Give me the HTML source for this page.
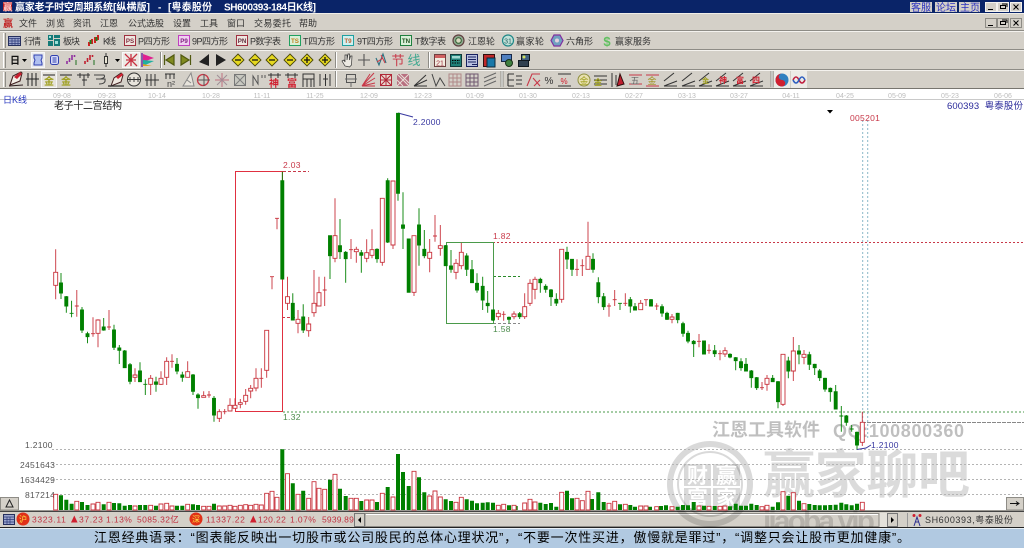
<!DOCTYPE html>
<html lang="zh">
<head>
<meta charset="utf-8">
<title>赢家老子时空周期系统</title>
<style>
html,body{margin:0;padding:0;background:#fff;width:1024px;height:548px;overflow:hidden}
svg{display:block;position:absolute;left:0;top:0}
text{font-family:"Liberation Sans","WenQuanYi Zen Hei","Noto Sans CJK SC",sans-serif}
.t9{font-size:9px;fill:#333}
.d{font-size:7px;fill:#bcbcbc;text-anchor:middle}
.n{font-size:8.5px;letter-spacing:.3px}
</style>
</head>
<body>
<svg width="1024" height="548" viewBox="0 0 1024 548" xmlns="http://www.w3.org/2000/svg">
<!-- base -->
<rect x="0" y="0" width="1024" height="548" fill="#fff"/>
<rect x="0" y="0" width="1024" height="13" fill="#0a2468"/>
<rect x="0" y="13" width="1024" height="76" fill="#d4d0c8"/>
<path d="M0 13.5H1024" stroke="#f0eee8"/>
<path d="M0 30.5H1024M0 49.5H1024M0 69.5H1024" stroke="#8e8c86"/>
<path d="M0 31.5H1024M0 50.5H1024M0 70.5H1024" stroke="#f4f2ee"/>
<path d="M0 88.5H1024" stroke="#77756f"/>
<path d="M0 99.5H1024" stroke="#c9c9c9"/>
<!-- status bar -->
<rect x="0" y="510" width="1024" height="18" fill="#d4d0c8"/>
<path d="M0 510.5H1024" stroke="#9a9892"/><path d="M0 511.5H1024" stroke="#444"/>
<rect x="354" y="513" width="544" height="14" fill="#e4e1da"/>
<rect x="365" y="513.5" width="514" height="13" fill="#d4d0c8" stroke="#8e8c86"/>
<path d="M366 514.5H878" stroke="#fff"/>
<rect x="354.5" y="513.5" width="10" height="13" fill="#d4d0c8" stroke="#777"/>
<path d="M361 517v6l-3-3z" fill="#000"/>
<rect x="887.5" y="513.5" width="10" height="13" fill="#d4d0c8" stroke="#777"/>
<path d="M891 517v6l3-3z" fill="#000"/>
<path d="M907.5 513V527" stroke="#999"/>
<!-- watermark -->
<g>
<g fill="#000" fill-opacity=".15">
<path fill-rule="evenodd" d="M710 441a43 43 0 1 0 .01 0zM710 447a37 37 0 1 1-.01 0zM710 451a33 33 0 1 0 .01 0zM710 453a31 31 0 1 1-.01 0z"/>
<rect x="684" y="464" width="27" height="22"/><rect x="713" y="464" width="27" height="22"/><rect x="684" y="488" width="27" height="22"/><rect x="713" y="488" width="27" height="22"/>
</g>
<g fill="#fff" font-weight="700" font-size="21" text-anchor="middle">
<text x="697.5" y="483">财</text><text x="726.5" y="483">赢</text><text x="697.5" y="506">富</text><text x="726.5" y="506">家</text>
</g>
<text x="763" y="493" font-size="52" font-weight="700" fill="#000" fill-opacity=".14" textLength="207" lengthAdjust="spacing">赢家聊吧</text>
<text x="712" y="436" font-size="18" font-weight="700" fill="#000" fill-opacity=".25" textLength="108" lengthAdjust="spacing">江恩工具软件</text>
<text x="833" y="437" font-size="18" font-weight="700" fill="#000" fill-opacity=".25" textLength="131" lengthAdjust="spacing">QQ:100800360</text>
<text x="763" y="531" font-size="30" font-weight="700" fill="#000" fill-opacity=".14" textLength="112" lengthAdjust="spacing">jiaoba.vip</text>
</g>
<!-- title text -->
<g fill="#fff" font-weight="700" font-size="10">
<text x="15" y="10.5" textLength="98" lengthAdjust="spacing">赢家老子时空周期系统</text>
<text x="113" y="10.5" textLength="37" lengthAdjust="spacing">[纵横版]</text>
<text x="158" y="10.5">-</text>
<text x="168" y="10.5" textLength="44" lengthAdjust="spacing">[粤泰股份</text>
<text x="224" y="10.5" textLength="92" lengthAdjust="spacing">SH600393-184日K线]</text>
</g>
<rect x="3" y="2" width="9" height="9" fill="#c02020"/>
<text x="3" y="10.5" font-size="9.5" font-weight="700" fill="#ffd0d0">赢</text>
<!-- title buttons -->
<g fill="#d4d0c8"><rect x="910" y="2" width="22" height="10"/><rect x="935" y="2" width="22" height="10"/><rect x="959" y="2" width="21" height="10"/></g>
<g fill="#2a30c0" font-size="10"><text x="911" y="11" textLength="20">客服</text><text x="936" y="11" textLength="20">论坛</text><text x="960" y="11" textLength="20">主页</text></g>
<g id="wb" fill="#d4d0c8" stroke="#f4f2ee">
<rect x="985.5" y="2.5" width="11" height="9"/><rect x="997.5" y="2.5" width="11" height="9"/><rect x="1010.5" y="2.5" width="11" height="9"/>
<rect x="985.5" y="18.5" width="11" height="9" stroke="#8e8c86"/><rect x="997.5" y="18.5" width="11" height="9" stroke="#8e8c86"/><rect x="1010.5" y="18.5" width="11" height="9" stroke="#8e8c86"/>
</g>
<g stroke="#000" fill="none">
<path d="M988 9.5h5M1000.5 5.5h5v3h-5zM1002 4h5v3M1013.5 4.5l5 5M1018.5 4.5l-5 5"/>
<path d="M988 25.5h5M1000.5 21.5h5v3h-5zM1002 20h5v3M1013.5 20.5l5 5M1018.5 20.5l-5 5"/>
</g>
<!-- menu -->
<text x="3" y="27" font-size="10" font-weight="700" fill="#c02020">赢</text>
<g class="t9">
<text x="19" y="26.5" class="t9" textLength="18">文件</text>
<text x="46" y="26.5" class="t9" textLength="19">浏览</text>
<text x="73" y="26.5" class="t9" textLength="18">资讯</text>
<text x="100" y="26.5" class="t9" textLength="18">江恩</text>
<text x="128" y="26.5" class="t9" textLength="36">公式选股</text>
<text x="173" y="26.5" class="t9" textLength="18">设置</text>
<text x="200" y="26.5" class="t9" textLength="18">工具</text>
<text x="227" y="26.5" class="t9" textLength="18">窗口</text>
<text x="254" y="26.5" class="t9" textLength="37">交易委托</text>
<text x="299" y="26.5" class="t9" textLength="18">帮助</text>
</g>
<!-- grips -->
<path d="M3.5 33V48M3.5 52V68M3.5 72V87" stroke="#fff"/><path d="M5.5 33V48M5.5 52V68M5.5 72V87" stroke="#8e8c86"/>
<!-- row 2 -->
<g class="t9">
<text x="24" y="44.5" class="t9" textLength="17">行情</text>
<text x="63" y="44.5" class="t9" textLength="17">板块</text>
<text x="103" y="44.5" class="t9" textLength="13">K线</text>
<text x="138" y="44.5" class="t9" textLength="32">P四方形</text>
<text x="192" y="44.5" class="t9" textLength="36">9P四方形</text>
<text x="250" y="44.5" class="t9" textLength="31">P数字表</text>
<text x="303" y="44.5" class="t9" textLength="32">T四方形</text>
<text x="357" y="44.5" class="t9" textLength="36">9T四方形</text>
<text x="415" y="44.5" class="t9" textLength="31">T数字表</text>
<text x="468" y="44.5" class="t9" textLength="27">江恩轮</text>
<text x="516" y="44.5" class="t9" textLength="28">赢家轮</text>
<text x="566" y="44.5" class="t9" textLength="27">六角形</text>
<text x="615" y="44.5" class="t9" textLength="36">赢家服务</text>
</g>
<rect x="8.5" y="36.5" width="12" height="9" fill="#9aa4cc" stroke="#26305e"/><path d="M9 38.5H20M9 41H20M9 43.4H20M12 38V45M15 38V45M18 38V45" stroke="#2c3a78" stroke-width=".7"/>
<g fill="#147a78"><rect x="48" y="35" width="5" height="5"/><rect x="54" y="35" width="6" height="3"/><rect x="48" y="41" width="5" height="5"/><rect x="54" y="39" width="6" height="7"/></g><g fill="#9be0d8"><rect x="49" y="36" width="2" height="2"/><rect x="55" y="41" width="3" height="3"/></g>
<path d="M89 42v4M92 39v5M95 37v6M98 35v5" stroke="#d02020" stroke-width="2"/><path d="M90.5 40v4M96.5 37v4" stroke="#208020" stroke-width="2"/>
<g font-size="6.2" font-weight="700" text-anchor="middle">
<rect x="124.5" y="35.5" width="11" height="10" fill="#efe6e0" stroke="#a03040"/><text x="130" y="43" fill="#803040">PS</text>
<rect x="178.5" y="35.5" width="11" height="10" fill="#f0d0f0" stroke="#c040c0"/><text x="184" y="43" fill="#802080">P9</text>
<rect x="236.5" y="35.5" width="11" height="10" fill="#efe6e0" stroke="#a03040"/><text x="242" y="43" fill="#603040">PN</text>
<rect x="289.5" y="35.5" width="11" height="10" fill="#d8f0d8" stroke="#20a060"/><text x="295" y="43" fill="#c08020">TS</text>
<rect x="342.5" y="35.5" width="11" height="10" fill="#d0f0f0" stroke="#20a0a0"/><text x="348" y="43" fill="#c06030">T9</text>
<rect x="400.5" y="35.5" width="11" height="10" fill="#d8f0d8" stroke="#208040"/><text x="406" y="43" fill="#205020">TN</text>
</g>
<circle cx="458.5" cy="40.5" r="5.5" fill="#90a890" stroke="#604040" stroke-width="1.2"/><circle cx="458.5" cy="40.5" r="2.8" fill="#d8d8c0" stroke="#306030"/>
<circle cx="508" cy="40.5" r="5.5" fill="#c0e0d8" stroke="#208888" stroke-width="1.2"/><text x="508" y="43.5" font-size="7" text-anchor="middle" fill="#206060">31</text>
<path d="M554 35h6l3 5.5-3 5.5h-6l-3-5.5z" fill="#70a0c0" stroke="#8030a0" stroke-width="1.2"/><circle cx="557" cy="40.5" r="2" fill="#e0d0e0"/>
<text x="607" y="46" font-size="13" font-weight="700" text-anchor="middle" fill="#60c060">$</text>
<!-- row 3 -->
<text x="10" y="64" font-size="10" font-weight="700" fill="#111">日</text>
<path d="M22 59h5l-2.5 3z" fill="#000"/>
<rect x="31.5" y="52.5" width="13" height="15" fill="#e6e8ee" stroke="#f6f6f6"/>
<path d="M34 55h8v3l-1 2 1 3v2h-8v-2l1-3-1-2z" fill="#b0c0f0" stroke="#3040b0"/>
<rect x="50.5" y="55.5" width="8" height="9" rx="2" fill="#d8dcf8" stroke="#3040b0"/><path d="M52.5 58h4M52.5 60h4M52.5 62h4" stroke="#3040b0"/>
<path d="M67 64v-3M69.5 62v-4M72 60v-5M74.5 57v-2" stroke="#9030a0" stroke-width="1.6"/><path d="M76 60v5" stroke="#207020"/>
<path d="M85 64v-3M87.5 62v-4M90 60v-5M92.5 57v-2" stroke="#c02030" stroke-width="1.6"/><path d="M94 60v5" stroke="#207020"/>
<rect x="104.5" y="56.5" width="3" height="7" fill="#e8e4d4" stroke="#333"/><path d="M106 53v3M106 64v3" stroke="#333"/>
<path d="M115 59h5l-2.5 3z" fill="#000"/>
<rect x="122.5" y="52.5" width="17" height="15" fill="#ece9e4" stroke="#f8f8f8"/>
<path d="M125 54l12 12M137 54l-12 12M126 60h10M131 54v12" stroke="#c83040" stroke-width="1.3"/>
<path d="M142 53v14" stroke="#7030a0" stroke-width="1.5"/><path d="M143 54l11 4-11 4z" fill="#e02090"/><path d="M143 60l11 1-11 5z" fill="#20b0a0"/><path d="M143 64l9 2h-9z" fill="#e0a020"/>
<path d="M160.5 52V68" stroke="#8e8c86"/><path d="M161.5 52V68" stroke="#fff"/>
<path d="M164.5 55V65M174 55v10l-8-5z" fill="#808a20" stroke="#505810" stroke-width="1.2"/>
<path d="M190.5 55V65M181 55v10l8-5z" fill="#808a20" stroke="#505810" stroke-width="1.2"/>
<path d="M209 54v12l-10-4z" fill="#222"/><path d="M216 54v12l10-6z" fill="#222"/>
<g fill="#e6d820" stroke="#4a4808" stroke-width=".9">
<path d="M238 54l6 6-6 6-6-6z"/><path d="M255 54l6 6-6 6-6-6z"/><path d="M272 54l6 6-6 6-6-6z"/><path d="M290 54l6 6-6 6-6-6z"/><path d="M307 54l6 6-6 6-6-6z"/><path d="M325 54l6 6-6 6-6-6z"/>
</g>
<path d="M235 60h6M252 60h6M269 60h6M287 60h6M304 60h6M322 60h6M307 57v6M325 57v6" stroke="#111" stroke-width="1.3"/>
<path d="M335.5 52V68" stroke="#8e8c86"/><path d="M336.5 52V68" stroke="#fff"/>
<path d="M345 66l-3-5 2-1 1 2v-7h2v5l1-6h1.5v6l1-4h1.5l-.5 9-2 2z" fill="#ece9e2" stroke="#333" stroke-width=".7"/>
<path d="M364 54v12M358 60h12" stroke="#555" stroke-width="1.1"/>
<path d="M376 58l3 7 4-11 3 9" fill="none" stroke="#2a7080" stroke-width="1.1"/><path d="M381 55l4 8M377 62l6-4" stroke="#d03040" stroke-width=".9"/>
<text x="398" y="65" font-size="13" text-anchor="middle" fill="#c83848">节</text>
<text x="414" y="65" font-size="13" text-anchor="middle" fill="#40a890">线</text>
<path d="M428.5 52V68" stroke="#8e8c86"/><path d="M429.5 52V68" stroke="#fff"/>
<rect x="434.5" y="54.5" width="11" height="12" fill="#f2ece0" stroke="#704040"/><rect x="435" y="55" width="10" height="3" fill="#d06060"/><text x="440" y="65.5" font-size="7" text-anchor="middle" fill="#a03040">21</text>
<rect x="450.5" y="54.5" width="11" height="12" fill="#208078" stroke="#103838"/><rect x="452" y="56" width="8" height="2.5" fill="#a0d8d0"/><path d="M452 60.5h8M452 63h8" stroke="#000" stroke-dasharray="1.5 1"/>
<rect x="466.5" y="54.5" width="11" height="12" fill="#b8c0e0" stroke="#18205e"/><path d="M468 57h8M468 59.5h8M468 62h8M472 64.5h5" stroke="#18205e"/>
<rect x="483.5" y="54.5" width="11" height="12" fill="#c02828" stroke="#301010"/><rect x="487" y="58" width="8" height="9" fill="#1878a8" stroke="#102838"/>
<rect x="501.5" y="54.5" width="10" height="7" fill="#5080c0" stroke="#182848"/><circle cx="509" cy="63" r="3.5" fill="#408040" stroke="#183018"/>
<rect x="521.5" y="54.5" width="8" height="6" fill="#406080" stroke="#101820"/><rect x="518.5" y="60.5" width="10" height="6" fill="#304050" stroke="#101820"/><circle cx="524" cy="57" r="1.5" fill="#d0e060"/>
<!-- row 4 -->
<path d="M10 85l3-9 8-4 1 1-2 8z" fill="#f4f0e8" stroke="#402020" stroke-width="1.1"/><path d="M14 77l6-5 2 2-5 5z" fill="#c82030"/><path d="M9 86l14-1" stroke="#302020"/>
<path d="M28 73V86M32 73V86M36 73V86M26 79H39" stroke="#222" stroke-width="1"/>
<rect x="41.5" y="71.5" width="15" height="16" fill="#e6e3dc" stroke="#f6f6f6"/>
<path d="M43 75h12" stroke="#222" stroke-width="1"/><text x="49" y="85" font-size="10" text-anchor="middle" fill="#a0a020" font-weight="700">金</text>
<path d="M60 75h12" stroke="#222"/><text x="66" y="85" font-size="10" text-anchor="middle" fill="#a0a020" font-weight="700">金</text>
<path d="M77 75h13M80 73v5M84 75v11M88 73v5M82 80h5" stroke="#333"/>
<path d="M94 75h10q2 3-4 4h-3M96 79h9q1 5-6 5" fill="none" stroke="#444" stroke-width="1.1"/>
<path d="M111 86l3-8 7-5 2 2-2 7z" fill="#f0e8e0" stroke="#402020"/><path d="M116 77l6-4 1 2-5 4z" fill="#d02030"/><path d="M108 86h16" stroke="#333" stroke-width="1.3"/>
<circle cx="134" cy="79.5" r="6.5" fill="#e8e4dc" stroke="#333"/><path d="M127 79.5h14M130 77v5M134 77v5M138 77v5" stroke="#333" stroke-width=".9"/>
<path d="M147 74v12M151 74v12M155 74v12M145 80h14" stroke="#333"/>
<path d="M165 74h10M166 74v5M170 74v5M174 74v5" stroke="#333"/><text x="171" y="87" font-size="9" text-anchor="middle" fill="#444">n²</text>
<path d="M183 86l8-13 3 13zM187 80l4 3" fill="#e8e4dc" stroke="#888"/>
<circle cx="203" cy="80" r="5.5" fill="none" stroke="#c83848" stroke-width="1.3"/><path d="M198 80h12M204 74v12" stroke="#555"/>
<path d="M215 80h14M222 73v14" stroke="#c07080"/><path d="M217 75l10 10M227 75l-10 10" stroke="#a09098"/>
<rect x="234.5" y="74.5" width="11" height="11" fill="#c8c8c0" stroke="#777"/><path d="M235 75l10 10M245 75l-10 10" stroke="#808080"/>
<path d="M253 86V76l5 8V75M262 75v3M265 75v3" fill="none" stroke="#555"/>
<path d="M268 75h13M271 73v5M278 73v5" stroke="#333"/><text x="274" y="87" font-size="10" text-anchor="middle" font-weight="700" fill="#d02030">神</text>
<path d="M285 75h13M288 73v5M295 73v5" stroke="#333"/><text x="292" y="87" font-size="10" text-anchor="middle" font-weight="700" fill="#d02030">富</text>
<path d="M303 74h11v5h-11zM303 79v8M307 79v8M311 79v8M314 79v8" fill="none" stroke="#333"/>
<path d="M320 74v12M330 74v12M323 79h5M325.5 74v12" stroke="#333"/>
<path d="M335.5 71V87" stroke="#8e8c86"/><path d="M336.5 71V87" stroke="#fff"/>
<rect x="346.5" y="74.5" width="9" height="8" fill="none" stroke="#555"/><path d="M345 79h12M351 82v5" stroke="#666"/>
<path d="M362 86l12-13M362 86l8-12M362 86l13-8M362 86l13-3M362 86h13" stroke="#c83848" stroke-width="1"/>
<rect x="380.5" y="74.5" width="11" height="11" fill="#e8d8d0" stroke="#b02838"/><path d="M381 75l10 10M391 75l-10 10M386 75v10M381 80h10" stroke="#b02838"/>
<path d="M397 74h12v12h-12z" fill="#b87080"/><path d="M397 74l12 12M409 74l-12 12M400 74l9 9M397 80l6 6" stroke="#e8e0d8"/>
<path d="M414 86l12-11M414 86l13-6M414 86h13" stroke="#333"/>
<path d="M432 74l4 12 4-8 5 8" fill="none" stroke="#444"/>
<path d="M449 74h12v12h-12zM449 78h12M449 82h12M453 74v12M457 74v12" fill="none" stroke="#b08888"/>
<path d="M466 74h12v12h-12zM466 78h12M466 82h12M470 74v12M474 74v12" fill="none" stroke="#705870"/>
<path d="M484 78l12-5M484 82l12-5M484 86l12-5" stroke="#666"/>
<path d="M501 71V87M503 71V87" stroke="#8e8c86"/><path d="M502 71V87" stroke="#fff"/>
<path d="M508 74v12M508 74h6M508 80h6M508 86h6M516 76h6M516 80h6M516 84h6" stroke="#333" stroke-width="1.1"/>
<path d="M527 86l5-12h8M533 78l7 8M540 80l-6 6" fill="none" stroke="#c83848" stroke-width="1.1"/>
<text x="549" y="84" font-size="10" text-anchor="middle" fill="#333">%</text>
<path d="M558 74h13M558 86h13" stroke="#333"/><text x="564" y="84" font-size="8" text-anchor="middle" fill="#d02030">%</text>
<circle cx="584" cy="80" r="6" fill="#e8e0b0" stroke="#909040"/><text x="584" y="84" font-size="9" text-anchor="middle" fill="#a0a020">金</text>
<path d="M594 76h13M594 80h13M594 84h13" stroke="#333"/><text x="598" y="85" font-size="8" text-anchor="middle" fill="#a0a020" font-weight="700">金</text>
<path d="M612 73v14M616 75v10" stroke="#333"/><path d="M617 86l3-12 4 10z" fill="#c02030" stroke="#301010"/>
<path d="M629 75h13M629 84h13" stroke="#c83848"/><text x="635" y="84" font-size="9" text-anchor="middle" fill="#666">五</text>
<path d="M646 75h13M646 86h13" stroke="#c83848"/><text x="652" y="84" font-size="9" text-anchor="middle" fill="#a09020">金</text>
<g stroke="#333" fill="none"><path d="M664 86l13-5M664 86h13M664 81l10-8"/><path d="M682 86l13-5M682 86h13M682 81l10-8"/><path d="M699 86l13-5M699 86h13M699 81l10-8"/><path d="M716 86l13-5M716 86h13M716 81l10-8"/><path d="M733 86l13-5M733 86h13M733 81l10-8"/><path d="M750 86l13-5M750 86h13M750 81l10-8"/></g>
<text x="702" y="83" font-size="7" fill="#a0a020" font-weight="700">金</text>
<text x="719" y="83" font-size="8" fill="#d02030" font-weight="700">神</text>
<text x="736" y="83" font-size="8" fill="#d02030" font-weight="700">富</text>
<text x="752" y="83" font-size="8" fill="#d02030" font-weight="700">四</text>
<path d="M771 71V87M773 71V87" stroke="#8e8c86"/><path d="M772 71V87" stroke="#fff"/>
<rect x="774" y="71" width="16" height="17" fill="#ecebe6"/><rect x="791" y="71" width="16" height="17" fill="#ecebe6"/>
<circle cx="782" cy="80" r="6.5" fill="#3080c0"/><path d="M782 73.5a6.5 6.5 0 0 0 0 13a3.25 3.25 0 0 0 0-6.5a3.25 3.25 0 0 1 0-6.5z" fill="#d02030"/>
<path d="M793 80q3-6 6 0t6 0" fill="none" stroke="#c02040" stroke-width="1.6"/><path d="M793 80q3 6 6 0t6 0" fill="none" stroke="#3060c0" stroke-width="1.6"/>
<!-- dates -->
<g class="d">
<text class="d" x="62" y="98">09-08</text><text class="d" x="107" y="98">09-23</text><text class="d" x="157" y="98">10-14</text><text class="d" x="211" y="98">10-28</text><text class="d" x="262" y="98">11-11</text><text class="d" x="315" y="98">11-25</text><text class="d" x="369" y="98">12-09</text><text class="d" x="423" y="98">12-23</text><text class="d" x="475" y="98">01-09</text><text class="d" x="528" y="98">01-30</text><text class="d" x="581" y="98">02-13</text><text class="d" x="634" y="98">02-27</text><text class="d" x="687" y="98">03-13</text><text class="d" x="739" y="98">03-27</text><text class="d" x="791" y="98">04-11</text><text class="d" x="845" y="98">04-25</text><text class="d" x="897" y="98">05-09</text><text class="d" x="950" y="98">05-23</text><text class="d" x="1003" y="98">06-06</text>
</g>
<text x="3" y="103" font-size="9" fill="#2838c0" textLength="24">日K线</text>
<text x="54" y="109" font-size="10" fill="#222" textLength="68">老子十二宫结构</text>
<text x="947" y="109" font-size="9.5" fill="#2a2a9a" textLength="76" xml:space="preserve">600393  粤泰股份</text>
<path d="M827 110h6l-3 3.5z" fill="#000"/>
<!-- grid & lines -->
<path d="M52 449.5H1024M52 464.5H1024M52 479.5H1024M52 494.5H1024" stroke="#b4b4b4" stroke-dasharray="2 2"/>
<path d="M862 422.5H1024" stroke="#888" stroke-dasharray="4 1"/>
<path d="M283 412H1024" stroke="#4a9a4a" stroke-dasharray="2 2"/>
<path d="M493 242.5H1024" stroke="#c83848" stroke-dasharray="2 2"/>
<path d="M283 171.5H309M282 317.5H296" stroke="#c83848" stroke-dasharray="3 2"/>
<path d="M493 276.5H520" stroke="#2a8a2a" stroke-dasharray="3 2"/><path d="M493 323.5H520" stroke="#888" stroke-dasharray="3 2"/>
<path d="M862.7 120V440M867.7 120V440" stroke="#8ab8c8" stroke-dasharray="2 2"/>
<path d="M235.5 411.5V171.5H282.5V411.5z" fill="none" stroke="#e03040"/>
<path d="M446.5 242.5H493.5V323.5H446.5z" fill="none" stroke="#4a9a4a"/>
<path d="M398 113l15 4M857 449.5l9-1.5 5-3" fill="none" stroke="#3838a0"/>
<g class="n">
<text class="n" x="283" y="168" fill="#c83848">2.03</text>
<text class="n" x="283" y="420" fill="#4a8a4a">1.32</text>
<text class="n" x="413" y="125" fill="#3838a0">2.2000</text>
<text class="n" x="493" y="239" fill="#c83848">1.82</text>
<text class="n" x="493" y="332" fill="#4a8a4a">1.58</text>
<text class="n" x="871" y="448" fill="#3838a0">1.2100</text>
<text class="n" x="850" y="121" fill="#c83848">005201</text>
<text class="n" x="25" y="448" fill="#555">1.2100</text>
<text class="n" x="20" y="468" fill="#555">2451643</text>
<text class="n" x="20" y="483" fill="#555">1634429</text>
<text class="n" x="25" y="498" fill="#555">817214</text>
</g>
<!-- buttons -->
<rect x="0.5" y="497.5" width="18" height="12.5" fill="#d4d0c8" stroke="#8e8c86"/><path d="M9.5 500l3.5 7h-7z" fill="none" stroke="#222"/>
<rect x="1006.5" y="497.5" width="17" height="12.5" fill="#d4d0c8" stroke="#8e8c86"/><path d="M1010 503.5h9M1016 501.5l3 2-3 2" fill="none" stroke="#111"/>
<!-- candles: green -->
<path fill="#008000" stroke="#008000" stroke-width=".9" d="M61 273V299M59.5 283h3v10h-3zM66.3 296V312.7M64.8 296.7h3v9.3h-3zM71.6 300.7V317.3M69.6 313.3h4M82 307V333M80.5 310h3v20h-3zM87.5 331.7V343.3M86 333.7h3v3h-3zM103.7 318V330.7M102.2 327h3v3h-3zM114 324.7V350M112.5 330h3v17.3h-3zM119.3 345V364M117.8 348h3v2.3h-3zM124.7 350V368M123.2 351h3v16.7h-3zM130 363V384.3M128.5 364.7h3v16.6h-3zM140 362.3V382M138.5 371h3v10.7h-3zM145.3 379.3V395M143.3 384.3h4M156 376.7V391.7M154.5 382h3v2.3h-3zM177 358V374.3M175.5 364.3h3v6.7h-3zM182.3 371.7V381.7M180.8 375h3v2.3h-3zM193 374V395M191.5 375h3v16.3h-3zM198 393.3V408.7M196.5 395h3v2.7h-3zM214 396V421.7M212.5 398.3h3v16.7h-3zM282.3 171.7V279M280.8 180.7h3v98.3h-3zM292.8 293.3V320M291.3 303.3h3v16.7h-3zM303.2 304.3V333M301.7 317h3v13h-3zM330 235.7V279M328.5 235.7h3v20h-3zM340 219V259M338.5 245.7h3v6h-3zM345.7 251V282.7M344.2 252.3h3v6.4h-3zM361.3 250V272.7M359.8 252.7h3v2.6h-3zM377 248.3V262.7M375.5 249.3h3v9.4h-3zM387.7 178.3V243M386.2 180.7h3v61.3h-3zM398 113.3V200.7M396.5 113.3h3v80h-3zM403 192.3V249M401.5 225h3v3.3h-3zM408.7 239V292.3M407.2 239h3v53.3h-3zM419 208.3V265.7M417.5 225h3v20h-3zM424.3 230V258.3M422.8 249.3h3v6.4h-3zM445.7 245V265.7M444.2 245.7h3v20h-3zM451 250V272.7M449.5 266h3v3.3h-3zM466.7 253.3V276M465.2 256h3v13.3h-3zM472 260V282.7M470.5 269.7h3v13h-3zM477 273.3V292.7M475.5 283.3h3v6.7h-3zM482.7 276.7V310M481.2 286.3h3v13.7h-3zM487.7 291V312.7M486.2 303.3h3v2.4h-3zM493 310V321M491.5 310h3v10h-3zM509 316.5V323.3M507.5 317.3h3v2h-3zM519.7 312V319M518.2 313.7h3v3h-3zM540.3 277.7V292.7M538.8 279.3h3v3.4h-3zM545.7 284.3V292.7M544.2 286.3h3v3h-3zM551 289V306M549.5 290h3v6.7h-3zM556.3 293.3V306M554.8 299.3h3v3.7h-3zM567 246.7V269M565.5 252.3h3v6.7h-3zM572 259V276M570.5 259.3h3v10h-3zM593 253.3V272.7M591.5 259.3h3v10h-3zM598.3 277.3V303.3M596.8 282.7h3v14h-3zM603.7 293V310M602.2 296.7h3v10h-3zM620 303.3V310M618 303.3h4M630.3 297V312.7M628.8 299.7h3v6.3h-3zM635 303V310M633.5 306.7h3v3.3h-3zM651 299V306M649.5 299.7h3v6.3h-3zM662 304.3V316.7M660.5 306.7h3v6.3h-3zM667 311.7V320M665.5 313.3h3v6h-3zM677.7 312.7V323.3M676.2 313.3h3v6.4h-3zM683 321.7V336.7M681.5 323.7h3v9.6h-3zM688 330.7V343.3M686.5 333.3h3v7.7h-3zM693.7 340V357M692.2 341.3h3v2.4h-3zM704 340.7V354.3M702.5 341h3v13h-3zM714.7 345V357M713.2 350.7h3v3h-3zM730 353.3V358.3M728.5 354.3h3v2.7h-3zM735.7 357V370.3M734.2 357.7h3v3h-3zM741 358.3V370.7M739.5 361.7h3v6h-3zM746 358V371.3M744.5 364.3h3v6.7h-3zM751.3 370V387.7M749.8 371h3v6.7h-3zM756.7 377V390M755.2 377.7h3v10h-3zM772.7 375V382M771.2 378.3h3v3.4h-3zM778 381V408.3M776.5 381.7h3v20h-3zM788.3 356.7V378.3M786.8 361h3v10h-3zM799 345V364.3M797.5 351h3v3h-3zM809.3 351.7V370M807.8 354.7h3v9.6h-3zM814.7 363.7V375M813.2 364.3h3v3.4h-3zM819.7 369V381M818.2 371h3v6.7h-3zM825 377.7V391.7M823.5 378.3h3v10.7h-3zM830.3 387.5V401.7M828.8 388.3h3v3.4h-3zM835.7 385V409M834.2 391.7h3v17.3h-3zM841.3 406V431.7M839.3 416h4M846.3 415V425.7M844.8 416h3v6.3h-3zM851.7 425V431.7M849.7 429h4M857 431.5V449.3M855.5 432.3h3v12.7h-3z"/>
<!-- candles: red -->
<path fill="#fff" stroke="#c8323c" stroke-width=".9" d="M55.7 249.3V272.3M55.7 285.3V299.3M53.7 272.3h4v13h-4zM76.8 290V316.7M74.8 306h4M93 317.3V336.7M91 333.7h4M98 319.3V320M98 333.3V347.3M96 320h4v13.3h-4zM109 310V330M107 327h4M135 368.3V375M135 377.3V382M133 375h4v2.3h-4zM150.7 375V378.3M150.7 384.3V395M148.7 378.3h4v6h-4zM161 371.3V378.3M161 384.3V385M159 378.3h4v6h-4zM166.7 357.3V361.3M166.7 377.3V385M164.7 361.3h4v16h-4zM172 354.3V367.7M170 361.3h4M187.7 361.3V371.7M185.7 371.7h4v5.6h-4zM203.7 391.3V395.7M201.7 395.7h4v1.6h-4zM209 391V397.7M207 395h4M219.3 409.3V411.7M219.3 418.3V422M217.3 411.7h4v6.6h-4zM224.7 409V414.3M222.7 411.7h4M230 398.3V405.3M228 405.3h4v5.7h-4zM235 398.3V405.3M233 405.3h4v3h-4zM240.3 399V402.7M240.3 404.3V408.3M238.3 402.7h4v1.6h-4zM245.7 389V395.3M245.7 401.3V404.7M243.7 395.3h4v6h-4zM250.7 385V388.3M250.7 391V398.3M248.7 388.3h4v2.7h-4zM256 368.3V378.3M256 388V391.3M254 378.3h4v9.7h-4zM261.3 368.3V387.7M259.3 378.3h4M266.7 370.3V377.7M264.7 330.3h4v40h-4zM272 276.7V289.3M270 276.7h4M277 218.3V229.3M275 218.3h4M287.5 276.7V296.7M287.5 303.3V310M285.5 296.7h4v6.6h-4zM298 310V319.3M298 323.3V333.3M296 319.3h4v4h-4zM308.7 317V324M308.7 330.7V336.7M306.7 324h4v6.7h-4zM314 270V303.3M314 312.7V316.7M312 303.3h4v9.4h-4zM319 276.7V292.7M317 292.7h4v13.3h-4zM324.7 276.7V306M322.7 290h4M335 198.3V235.7M335 258.3V262.3M333 235.7h4v22.6h-4zM351 239V259M349 249.7h4M356.3 246.7V249.3M356.3 251.7V262.7M354.3 249.3h4v2.4h-4zM366.7 239.3V252.7M366.7 258.3V262.3M364.7 252.7h4v5.6h-4zM372 229.3V249.7M372 255.3V258.3M370 249.7h4v5.6h-4zM382.3 262.3V265.7M380.3 198.3h4v64h-4zM393 245V249M391 181h4v64h-4zM414 292.3V296M412 235.7h4v56.6h-4zM429.7 239V252.3M429.7 258.3V272.3M427.7 252.3h4v6h-4zM435 215V241.7M433 236h4M440.3 225V245.7M440.3 248.3V255.7M438.3 245.7h4v2.6h-4zM456 259V263.3M456 272.3V279.3M454 263.3h4v9h-4zM461.3 242.7V252.3M461.3 265.7V269.3M459.3 252.3h4v13.4h-4zM498.3 310V313.3M498.3 316.7V320M496.3 313.3h4v3.4h-4zM503.7 311.3V320.7M501.7 314.3h4M514 311.3V314M514 316.7V319.3M512 314h4v2.7h-4zM524.7 293.3V306.7M524.7 316.7V319M522.7 306.7h4v10h-4zM530 279.3V283.3M530 303.3V306M528 283.3h4v20h-4zM535 276.7V279.3M535 289.3V299.3M533 279.3h4v10h-4zM561.7 299.3V302.7M559.7 249.3h4v50h-4zM577 259.3V276M575 269.3h4M582.3 259.3V276M580.3 265.7h4M588 221.7V256.3M586 256.3h4v13h-4zM609 303.3V316.7M607 306h4M614.7 290V306M612.7 299.7h4M625.3 293.3V306M623.3 303.3h4M640.7 300V303.3M638.7 303.3h4v6.4h-4zM646 299.7V306M644 299.7h4M656.7 303.3V310M654.7 306h4M672 314V317M672 319.3V323.3M670 317h4v2.3h-4zM699 334V347.3M697 341.3h4M709 344.3V353.7M707 350.3h4M720 350.3V360.3M718 353.7h4M725 347.3V350.7M725 354V357M723 350.7h4v3.3h-4zM762 382V390M760 387.7h4M767 375V378.3M767 384.3V390.7M765 378.3h4v6h-4zM783 404.3V406M781 354.3h4v50h-4zM793.3 337V351M793.3 371V381M791.3 351h4v20h-4zM804 350V354.3M804 357.3V364.3M802 354.3h4v3h-4zM862.3 411.7V422.3M862.3 442.3V446M860.3 422.3h4v20h-4z"/>
<!-- volume: green -->
<path fill="#008000" d="M59 495.3h4V510h-4zM64.3 499.7h4V510h-4zM69.6 503.7h4V510h-4zM80 502h4v8h-4zM85.5 505h4v5h-4zM101.7 504.3h4V510h-4zM112 503h4v7h-4zM117.3 503.3h4V510h-4zM122.7 505.7h4V510h-4zM128 505h4v5h-4zM138 505h4v5h-4zM143.3 505h4v5h-4zM154 505.7h4V510h-4zM175 505.7h4V510h-4zM180.3 505.7h4V510h-4zM191 504.3h4V510h-4zM196 505h4v5h-4zM212 503.7h4V510h-4zM280.3 449.3h4V510h-4zM290.8 483.3h4V510h-4zM301.2 490.7h4V510h-4zM328 479.7h4V510h-4zM338 488.7h4V510h-4zM343.7 496h4V510h-4zM359.3 501h4v9h-4zM375 502h4v8h-4zM385.7 487h4V510h-4zM396 454h4V510h-4zM401 472h4V510h-4zM406.7 486h4V510h-4zM417 477.3h4V510h-4zM422.3 492.3h4V510h-4zM443.7 499.3h4V510h-4zM449 501h4v9h-4zM464.7 499.3h4V510h-4zM470 500.7h4V510h-4zM475 503.3h4V510h-4zM480.7 502.7h4V510h-4zM485.7 502.3h4V510h-4zM491 502.7h4V510h-4zM507 505.3h4V510h-4zM517.7 506h-4V510h4zM538.3 502.7h4V510h-4zM543.7 504h4V510h-4zM549 503h4v7h-4zM554.3 506.7h4V510h-4zM565 490.7h4V510h-4zM570 498.3h4V510h-4zM590 499h4v11h-4zM596.3 492.3h4V510h-4zM601.7 502h4v8h-4zM618 504.3h4V510h-4zM628.3 505h4v5h-4zM633 506.7h4V510h-4zM648 506.7h4V510h-4zM659 506h4v4h-4zM664 505.3h4V510h-4zM675.700 506.7h4V510h-4zM681 505h4v5h-4zM686 505.3h4V510h-4zM691.7 502h4v8h-4zM702 505.7h4V510h-4zM712.7 506h4v4h-4zM728 506.3h4V510h-4zM733.7 503.7h4V510h-4zM739 505.7h4V510h-4zM744 505.7h4V510h-4zM749.3 503.7h4V510h-4zM754.7 505h4v5h-4zM770.7 506.7h4V510h-4zM776 502.3h4V510h-4zM786.3 495.7h4V510h-4zM797 500.7h4V510h-4zM807.3 504h4v6h-4zM812.7 505h4v5h-4zM817.7 505.3h4V510h-4zM823 505.3h4V510h-4zM828.3 505h4v5h-4zM833.7 504.7h4V510h-4zM839.3 502.7h4V510h-4zM844.3 504.3h4V510h-4zM849.7 505.3h4V510h-4zM855 503.7h4V510h-4z"/>
<!-- volume: red -->
<path fill="#fff" stroke="#c8323c" stroke-width=".9" d="M53.7 494.3h4V510h-4zM74.8 501.3h4V510h-4zM91 504h4v6h-4zM96 502.3h4V510h-4zM107 502.3h4V510h-4zM133 506h4v4h-4zM148.7 505.3h4V510h-4zM159 504h4v6h-4zM164.7 503.3h4V510h-4zM170 506h4v4h-4zM185.7 504.3h4V510h-4zM201.7 506.3h4V510h-4zM207 506.3h4V510h-4zM217.3 506h4v4h-4zM222.7 506h4v4h-4zM228 505.3h4V510h-4zM233 506.3h4V510h-4zM238.3 505.3h4V510h-4zM243.7 504.7h4V510h-4zM248.7 505.3h4V510h-4zM254 504.3h4V510h-4zM259.3 505h4v5h-4zM264.7 493.3h4V510h-4zM270 491.3h4V510h-4zM275 497.3h4V510h-4zM285.5 473.7h4V510h-4zM296 494.3h4V510h-4zM306.7 498.3h4V510h-4zM312 481.7h4V510h-4zM317 488.3h4V510h-4zM322.7 489.3h4V510h-4zM333 474.3h4V510h-4zM349 498.3h4V510h-4zM354.3 498.3h4V510h-4zM364.7 500h4v10h-4zM370 500h4v10h-4zM380.3 493.3h4V510h-4zM391 497h4v13h-4zM412 471.3h4V510h-4zM427.7 496h4V510h-4zM433 491h4v19h-4zM438.3 497h4v13h-4zM454 502.3h4V510h-4zM459.3 497.3h4V510h-4zM496.3 505.3h4V510h-4zM501.7 504.3h4V510h-4zM512 505.3h4V510h-4zM522.7 503h4v7h-4zM528 499.3h4V510h-4zM533 502h4v8h-4zM559.7 492.3h4V510h-4zM575 498.3h4V510h-4zM580.3 500.7h4V510h-4zM586 491.3h4V510h-4zM607 503.3h4V510h-4zM612.7 501.3h4V510h-4zM623.3 504.3h4V510h-4zM638.7 506h4v4h-4zM644 506h4v4h-4zM654.7 506.7h4V510h-4zM670 506.7h4V510h-4zM697 506h4v4h-4zM707 506.3h4V510h-4zM718 506.3h4V510h-4zM723 506h4v4h-4zM760 506.7h4V510h-4zM765 505.3h4V510h-4zM781 491.7h4V510h-4zM791.3 492.7h4V510h-4zM802 503.7h4V510h-4zM860.3 502.3h4V510h-4z"/>
<!-- status -->
<rect x="3.5" y="514.5" width="11" height="10" fill="#9aa4cc" stroke="#26305e"/><path d="M4 517H14M4 519.5H14M4 522H14M7 517V524M10 517V524" stroke="#2c3a78" stroke-width=".7"/>
<circle cx="23" cy="519" r="6.5" fill="#e03018"/><text x="23" y="522" font-size="8" text-anchor="middle" fill="#ffe040">沪</text>
<g font-size="8.5" fill="#c03040" letter-spacing=".2">
<text x="32" y="522.5" textLength="34">3323.11</text>
<text x="79" y="522.5" textLength="24">37.23</text>
<text x="106" y="522.5" textLength="26">1.13%</text>
<text x="137" y="522.5" textLength="42">5085.32亿</text>
<text x="206" y="522.5" textLength="39">11337.22</text>
<text x="258" y="522.5" textLength="28">120.22</text>
<text x="290" y="522.5" textLength="26">1.07%</text>
<text x="322" y="522.5" textLength="32">5939.89</text>
</g>
<path d="M71 522.5l3.3-7 3.3 7zM250 522.5l3.3-7 3.3 7z" fill="#d02030"/>
<circle cx="196" cy="519" r="6.5" fill="#e03018"/><text x="196" y="522" font-size="8" text-anchor="middle" fill="#ffe040">深</text>
<path d="M914 526l3-9 3 9M915 522h4" fill="none" stroke="#303090"/><circle cx="914" cy="515.5" r="1.5" fill="#d02030"/><circle cx="920" cy="515.5" r="1.5" fill="#d02030"/>
<text x="925" y="523" font-size="9" fill="#333" textLength="88">SH600393,粤泰股份</text>
<!-- bottom strip -->
<rect x="0" y="527" width="1024" height="21" fill="#b1c9e1"/>
<path d="M0 527.5H1024" stroke="#222"/><path d="M0 528.5H1024" stroke="#e8f0f6"/>
<text x="94" y="542" font-size="13" fill="#000" textLength="816" lengthAdjust="spacing">江恩经典语录：“图表能反映出一切股市或公司股民的总体心理状况”，“不要一次性买进，傲慢就是罪过”，“调整只会让股市更加健康”。</text>
</svg>
</body>
</html>
